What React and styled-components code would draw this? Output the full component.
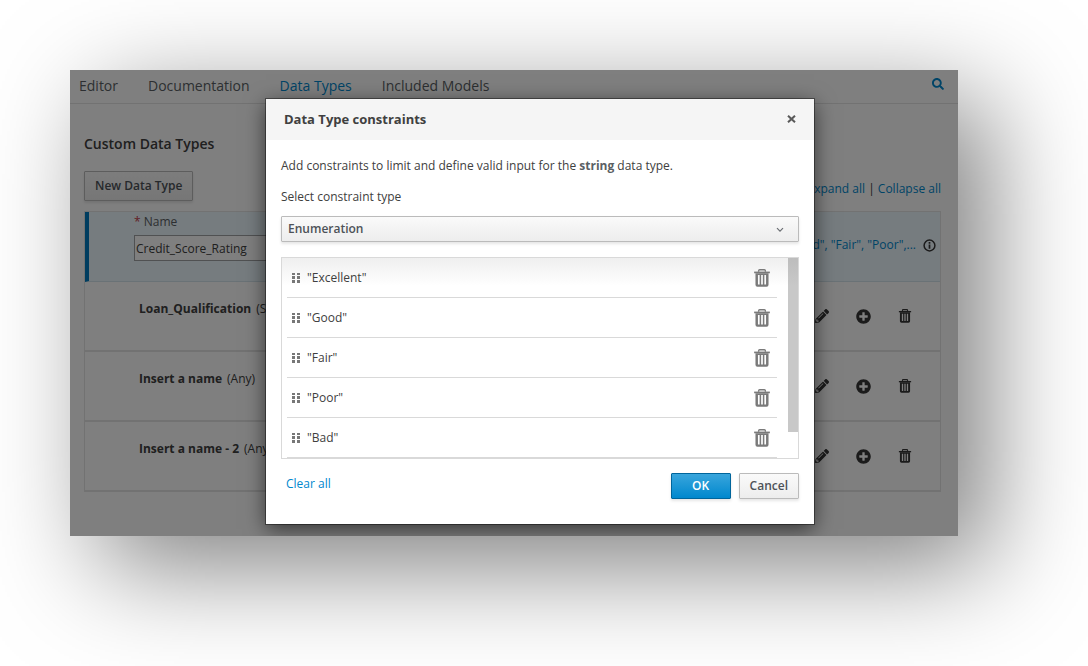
import React from "react";
import styled, { createGlobalStyle, css } from "styled-components";
import { FaPencilAlt, FaPlusCircle, FaSearch } from "react-icons/fa";

const Global = createGlobalStyle`
  *, *::before, *::after { box-sizing: border-box; }
  body {
    margin: 0;
    background: #fff;
    color: #404040;
    font: 12px/20px "Open Sans", "Noto Sans", sans-serif;
  }
  button, input, select { font: inherit; color: inherit; }
  h1, h2, p, ul { margin: 0; padding: 0; }
`;

const Page = styled.div`
  padding: 70px 130px 130px 70px;
`;

const Window = styled.div`
  position: relative;
  background: #fff;
  box-shadow: 30px 30px 100px rgba(0, 0, 0, 0.5);
`;

const Editor = styled.div`
  min-height: 466px;
`;

const TabBar = styled.nav`
  display: flex;
  align-items: center;
  gap: 30px;
  height: 34px;
  padding: 0 14px 2px 9px;
  border-bottom: 1px solid #e4e4e4;
`;

const Tab = styled.a`
  font-size: 14px;
  line-height: 30px;
  text-decoration: none;
  color: ${(p) => (p.$active ? "#0088ce" : "#5a5f64")};
`;

const IconButton = styled.button`
  display: inline-flex;
  align-items: center;
  justify-content: center;
  padding: 0;
  border: 0;
  background: none;
  color: ${(p) => p.$color || "#363636"};
  ${(p) => p.$end && css`margin-left: auto;`}
`;

const SearchButton = styled(IconButton)`
  margin-left: auto;
  padding-bottom: 4px;
`;

const Content = styled.main`
  padding: 30px 17px 44px 14px;
`;

const Heading = styled.h1`
  font-size: 14px;
  line-height: 20px;
  font-weight: 600;
`;

const Toolbar = styled.div`
  display: flex;
  justify-content: space-between;
  align-items: flex-end;
  margin: 17px 0 10px;
`;

const ExpandLinks = styled.div`
  padding-bottom: 2px;
`;

const Button = styled.button`
  height: ${(p) => (p.$large ? 30 : 26)}px;
  min-width: 60px;
  padding: 0 10px;
  border: 1px solid ${(p) => (p.$primary ? "#00659c" : "#bbb")};
  border-radius: 1px;
  background: ${(p) =>
    p.$primary
      ? "linear-gradient(#39a5dc, #0088ce)"
      : "linear-gradient(#fafafa, #ededed)"};
  box-shadow: 0 2px 3px rgba(3, 3, 3, 0.1);
  color: ${(p) => (p.$primary ? "#fff" : "#4d5258")};
  font-weight: 600;
`;

const Link = styled.a`
  color: #0088ce;
  text-decoration: none;
`;

const Types = styled.div`
  border: 1px solid #e4e4e4;
  border-bottom: 0;
`;

const TypeRow = styled.div`
  display: flex;
  justify-content: space-between;
  height: 70px;
  padding: 17px 28px 0 54px;
  border-bottom: 2px solid #e4e4e4;
`;

const EditedRow = styled.div`
  display: flex;
  justify-content: space-between;
  align-items: flex-start;
  height: 70px;
  padding-right: 4px;
  border-left: 4px solid #007bbf;
  border-bottom: 1px solid #d4e4ec;
  background: #edf8ff;
`;

const NameField = styled.label`
  display: flex;
  flex-direction: column;
  padding-left: 45px;
  color: #5a5f64;
`;

const Required = styled.span`
  color: #c4404a;
`;

const NameInput = styled.input`
  width: 200px;
  height: 26px;
  margin-top: 3px;
  padding: 0 1px;
  border: 1px solid #a0a2a4;
  background: #fff;
  color: #404040;
`;

const Constraint = styled.div`
  display: flex;
  align-items: center;
  gap: 7px;
  padding-top: 23px;
`;

const Kind = styled.span`
  margin-left: 5px;
`;

const Actions = styled.div`
  display: flex;
  gap: 27px;
  height: 34px;
  align-items: center;
`;

const Overlay = styled.div`
  position: absolute;
  inset: 0;
  display: grid;
  grid-template-columns: 196fr minmax(548px, 548fr) 144fr;
  align-items: start;
  padding-top: 29px;
  background: rgba(0, 0, 0, 0.5);
  overflow: hidden;
`;

const Dialog = styled.section`
  grid-column: 2;
  background: #fff;
  box-shadow: 0 0 0 1px rgba(0, 0, 0, 0.4), 0 5px 20px rgba(0, 0, 0, 0.6);
`;

const DialogHeader = styled.header`
  display: flex;
  justify-content: space-between;
  align-items: center;
  height: 41px;
  padding: 0 18px 1px;
  background: #f5f5f5;
`;

const DialogTitle = styled.h2`
  font-size: 13px;
  line-height: 20px;
  font-weight: 700;
`;

const DialogBody = styled.div`
  padding: 16px 15px 25px;
`;

const TypeName = styled.strong`
  color: #5a5f64;
`;

const SelectLabel = styled.label`
  display: block;
  margin: 11px 0 9px;
`;

const SelectBox = styled.div`
  display: grid;
  align-items: center;
  & > * { grid-area: 1 / 1; }
  & > svg { justify-self: end; margin: 2px 15px 0; pointer-events: none; }
`;

const Select = styled.select`
  appearance: none;
  width: 100%;
  height: 26px;
  padding: 0 6px;
  border: 1px solid #bbb;
  border-radius: 1px;
  background: linear-gradient(#fafafa, #ededed);
  box-shadow: 0 2px 3px rgba(3, 3, 3, 0.1);
  color: #4d5258;
  font-weight: 600;
`;

const ListFrame = styled.div`
  display: flex;
  justify-content: space-between;
  height: 202px;
  margin-top: 15px;
  border: 1px solid #d9d9d9;
  background: linear-gradient(#efefef, #fff 28px);
  overflow: hidden;
`;

const Items = styled.ul`
  flex: 1;
  padding: 0 11px 0 5px;
  list-style: none;
`;

const Item = styled.li`
  display: flex;
  align-items: center;
  gap: 6px;
  height: 40px;
  padding: 0 6px 0 5px;
  border-bottom: 1px solid #d9d9d9;
`;

const ScrollThumb = styled.div`
  width: 10px;
  height: 174px;
  background: linear-gradient(#bdbdbd, #c8c8c8 28px);
`;

const Footer = styled.footer`
  display: flex;
  align-items: center;
  gap: 8px;
  margin-top: 14px;
  padding-left: 5px;
  & > a { margin-right: auto; padding-bottom: 5px; }
`;

const Trash = ({ size = 16 }) => (
  <svg width={size} height={size} viewBox="0 0 16 16" fill="none" stroke="currentColor" aria-hidden="true">
    <path d="M5 2.4V1.6q0-.9.9-.9h4.2q.9 0 .9.9v.8" strokeWidth="1.2" />
    <path d="M1 2.3h14v1.5H1z" fill="currentColor" stroke="none" />
    <path
      d="M2.2 3.8h11.6v10.2q0 1.7-1.7 1.7H3.9q-1.7 0-1.7-1.7zM4.4 5.3v8.4h1.5V5.3zM7.25 5.3v8.4h1.5V5.3zM10.1 5.3v8.4h1.5V5.3z"
      fill="currentColor" fillRule="evenodd" stroke="none"
    />
  </svg>
);

const Grip = () => (
  <svg width="9" height="10" viewBox="0 0 9 10" fill="#777" aria-hidden="true">
    <path d="M0 0h3v2H0zM5 0h3v2H5zM0 3h3v3H0zM5 3h3v3H5zM0 7h3v3H0zM5 7h3v3H5z" />
  </svg>
);

const Info = () => (
  <svg width="13" height="13" viewBox="0 0 13 13" fill="none" stroke="#363636" aria-hidden="true">
    <circle cx="6.5" cy="6.5" r="5.4" strokeWidth="1.5" />
    <path d="M6.5 3v1.7M6.5 5.6v4.2" strokeWidth="1.7" />
  </svg>
);

const Chevron = () => (
  <svg width="8" height="6" viewBox="0 0 8 6" fill="none" stroke="#6a6e73" strokeWidth="1.2" aria-hidden="true">
    <path d="M1 1.2l3 3 3-3" />
  </svg>
);

const Close = () => (
  <svg width="9" height="8" viewBox="0 0 9 8" stroke="#5a5a5a" strokeWidth="2" aria-hidden="true">
    <path d="M1 .7l7 6.6M8 .7L1 7.3" />
  </svg>
);

const tabs = ["Editor", "Documentation", "Data Types", "Included Models"];
const types = [
  ["Loan_Qualification", "(Structure)"],
  ["Insert a name", "(Any)"],
  ["Insert a name - 2", "(Any)"],
];
const values = ["Excellent", "Good", "Fair", "Poor", "Bad"];

export default function App() {
  return (
    <Page>
      <Global />
      <Window>
        <Editor>
          <TabBar>
            {tabs.map((t) => (
              <Tab key={t} href="#" $active={t === "Data Types"}>{t}</Tab>
            ))}
            <SearchButton $color="#0088ce" aria-label="Search"><FaSearch size={12} /></SearchButton>
          </TabBar>
          <Content>
            <Heading>Custom Data Types</Heading>
            <Toolbar>
              <Button $large>New Data Type</Button>
              <ExpandLinks><Link href="#">Expand all</Link> | <Link href="#">Collapse all</Link></ExpandLinks>
            </Toolbar>
            <Types>
              <EditedRow>
                <NameField>
                  <span><Required>*</Required> Name</span>
                  <NameInput defaultValue="Credit_Score_Rating" />
                </NameField>
                <Constraint>
                  <Link href="#">"Excellent", "Good", "Fair", "Poor",...</Link>
                  <Info />
                </Constraint>
              </EditedRow>
              {types.map(([name, kind]) => (
                <TypeRow key={name}>
                  <div><strong>{name}</strong><Kind>{kind}</Kind></div>
                  <Actions>
                    <IconButton aria-label="Edit"><FaPencilAlt size={14} /></IconButton>
                    <IconButton aria-label="Add"><FaPlusCircle size={15} /></IconButton>
                    <IconButton aria-label="Delete"><Trash size={14} /></IconButton>
                  </Actions>
                </TypeRow>
              ))}
            </Types>
          </Content>
        </Editor>
        <Overlay>
          <Dialog role="dialog" aria-labelledby="dialog-title">
            <DialogHeader>
              <DialogTitle id="dialog-title">Data Type constraints</DialogTitle>
              <IconButton aria-label="Close"><Close /></IconButton>
            </DialogHeader>
            <DialogBody>
              <p>Add constraints to limit and define valid input for the <TypeName>string</TypeName> data type.</p>
              <SelectLabel htmlFor="constraint-type">Select constraint type</SelectLabel>
              <SelectBox>
                <Select id="constraint-type"><option>Enumeration</option></Select>
                <Chevron />
              </SelectBox>
              <ListFrame>
                <Items>
                  {values.map((v) => (
                    <Item key={v}>
                      <Grip />
                      <span>"{v}"</span>
                      <IconButton $color="#7a7a7a" $end aria-label={`Remove ${v}`}><Trash size={18} /></IconButton>
                    </Item>
                  ))}
                </Items>
                <ScrollThumb />
              </ListFrame>
              <Footer>
                <Link href="#">Clear all</Link>
                <Button $primary>OK</Button>
                <Button>Cancel</Button>
              </Footer>
            </DialogBody>
          </Dialog>
        </Overlay>
      </Window>
    </Page>
  );
}
